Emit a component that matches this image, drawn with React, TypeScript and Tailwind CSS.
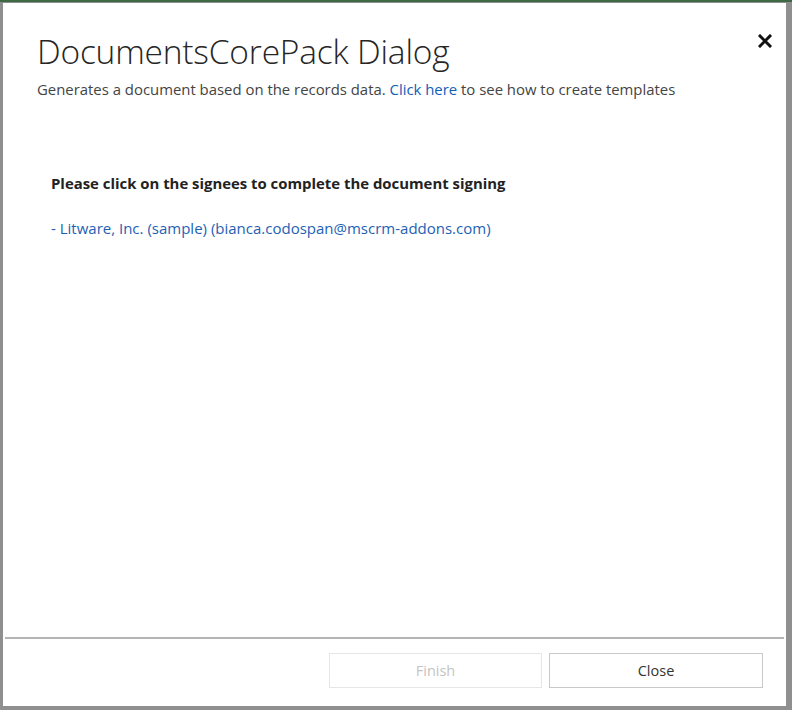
import React from "react";

export default function App() {
  return (
    <div className="w-[792px] h-[710px] bg-[#8f8f8f] flex flex-col overflow-hidden" style={{ fontFamily: '"Open Sans", "Noto Sans", sans-serif' }}>
      <div className="h-[2px] bg-[#3d6a44] shrink-0" />
      <div className="flex-1 flex pl-[3px] pr-[6px] pb-[4px] pt-[1px]">
        <div className="flex-1 bg-white flex flex-col">
          <div className="flex items-start justify-between pl-[34px] pr-[14px] pt-[25px]">
            <div>
              <h1 className="text-[33.5px] font-light text-[#262626] leading-[46px] tracking-[-0.2px]">DocumentsCorePack Dialog</h1>
              <p className="text-[14.9px] text-[#444444] mt-[5px] leading-[20px]">
                Generates a document based on the records data. <span className="text-[#1160b7]">Click here</span> to see how to create templates
              </p>
            </div>
            <svg width="14" height="14" viewBox="0 0 14 14" className="mt-[6px]">
              <path d="M2 2 L12 12 M12 2 L2 12" stroke="#111" strokeWidth="3" strokeLinecap="square" />
            </svg>
          </div>
          <div className="pl-[48px] pt-[74px] flex-1">
            <p className="text-[14.9px] font-bold text-[#222222] leading-[20px]">Please click on the signees to complete the document signing</p>
            <p className="text-[15px] text-[#1e5fb4] leading-[20px] mt-[25px]">- Litware, Inc. (sample) (bianca.codospan@mscrm-addons.com)</p>
          </div>
          <div className="mx-[2px] h-[2px] bg-[#b4b4b4]" />
          <div className="flex justify-end gap-[7px] pr-[23px] pt-[14px] pb-[18px]">
            <button className="w-[213px] h-[35px] border border-[#e6e6e6] text-[#c4c4c4] text-[14.5px] bg-white">Finish</button>
            <button className="w-[214px] h-[35px] border border-[#c8c8c8] text-[#333333] text-[14.5px] bg-white">Close</button>
          </div>
        </div>
      </div>
    </div>
  );
}
